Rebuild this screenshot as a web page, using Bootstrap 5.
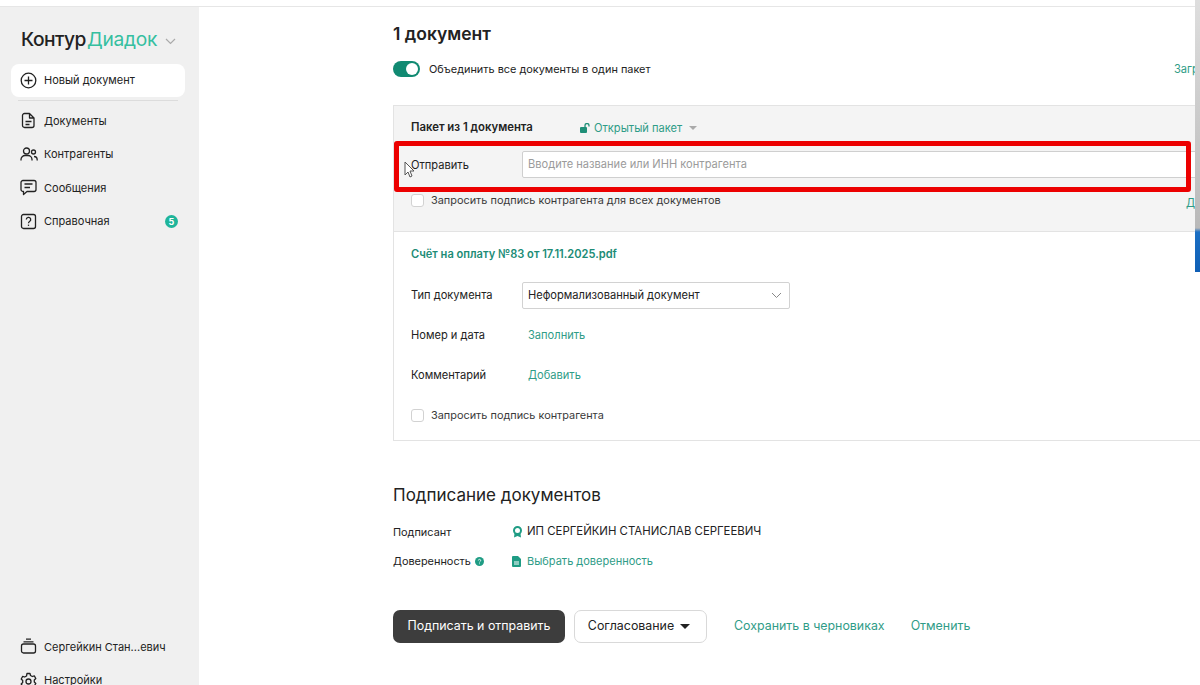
<!DOCTYPE html>
<html lang="ru"><head><meta charset="utf-8">
<link href="https://cdn.jsdelivr.net/npm/bootstrap@5.3.0/dist/css/bootstrap.min.css" rel="stylesheet">
<style>
html,body{height:685px;overflow:hidden}
body{font-family:Inter,"Liberation Sans",sans-serif;font-size:11.1px;color:#222;background:#fff;position:relative}
.shell{overflow:hidden;border-top:1px solid #e6e6e6;margin-top:6px;height:679px}
.side{width:199px;flex:none;background:#f0f0f0;height:679px;position:relative}
.logo{padding:20px 0 0 21px;height:57px;font-size:19.2px;letter-spacing:-.5px;line-height:24px;font-weight:500;color:#222;white-space:nowrap}
.logo b{font-weight:400;color:#35bfa0;margin-left:1px;letter-spacing:-.3px}
.logo svg{margin-left:3px;vertical-align:1px}
.sitem{display:flex;align-items:center;height:33.6px;padding-left:9px;margin-left:11px;width:174px;gap:7px;white-space:nowrap;font-size:11px}
.sitem svg{flex:none}
.snew{background:#fff;border-radius:8px;height:33px}
.sdiv{border-top:1px solid #dcdcdc;margin:3px 21px 3px 18px;height:0}
.cnt{margin-left:auto;margin-right:7px;width:13px;height:13px;border-radius:50%;background:#1fb59b;color:#fff;font-size:9px;font-weight:700;display:flex;align-items:center;justify-content:center}
.sfoot{position:absolute;left:0;top:623px}
.main{flex:1;min-width:0;padding:0 0 0 194px;position:relative;overflow:hidden}
.ttl{font-size:17.5px;font-weight:600;line-height:22px;margin:16px 0 0;color:#222}
.lnk{color:#2f9c87;text-decoration:none}
.tog{width:27px;height:16px;border-radius:8px;background:#118a72;position:relative;flex:none;display:block}
.tog::after{content:"";position:absolute;right:2px;top:2px;width:12px;height:12px;border-radius:50%;background:#fff}
.togrow{margin-top:16px;height:16px;gap:9px;font-size:10.9px}
.togend{position:absolute;left:975px;top:54px;white-space:nowrap}
.pack{margin-top:28px;border:1px solid #e3e3e3;border-right:0;width:900px}
.phead{background:#f4f4f4;height:126px;padding-left:17px;border-bottom:1px solid #e3e3e3;position:relative}
.prow1{height:44px;display:flex;align-items:center;font-weight:600;font-size:11.35px}
.pktitle{width:169px;flex:none}
.prow1 .open{font-weight:400;font-size:11.1px;display:flex;align-items:center;gap:3px}
.caret{display:inline-block;border-left:4px solid transparent;border-right:4px solid transparent;border-top:4px solid #aaa;margin-left:4px}
.prow2{display:flex;align-items:center;height:28px}
.lab{width:111px;flex:none}
.prow2 .lab{padding-top:2px}
.inp{flex:1;height:27px;border:1px solid #cfcfcf;border-radius:2px;background:#fff;color:#9b9b9b;display:flex;align-items:center;padding-left:5px}
.cbrow{display:flex;align-items:center;gap:7px;color:#3a3a3a;font-size:10.9px}
.headcb{margin-top:14px}
.cbx{width:13px;height:13px;border:1px solid #d2d2d2;border-radius:3px;background:#fff;flex:none;display:block}
.dlink{position:absolute;left:792px;top:89px}
.pbody{padding:14px 17px 0;height:208px}
.fname{font-weight:600;color:#208c76;line-height:16px}
.frow{display:flex;align-items:center;height:27px;margin-top:13px}
.frow.first{margin-top:20px}
.frow .lnk{margin-left:6px}
.sel{width:268px;height:27px;border:1px solid #d2d2d2;border-radius:2px;display:flex;align-items:center;justify-content:space-between;padding:0 7px 0 5px}
.lastcb{margin-top:19px;height:14px}
.h2x{font-size:17px;font-weight:400;line-height:22px;margin:43px 0 0;color:#222}
.srow{display:flex;align-items:center;height:16px;font-size:10.9px;margin-top:13px}
.srow.first{margin-top:18px}
.srow .slab{width:119px;flex:none}
.val{font-size:11.4px;display:flex;align-items:center;gap:4px}
.val.lnk{font-size:11px;gap:5px}
.btnrow{margin-top:41px;height:33px;display:flex;align-items:center;font-size:12.4px}
.bmain{background:#3d3d3d;color:#fff;border:0;border-radius:7px;height:33px;width:172px;font-size:12.4px;padding:0}
.bsec{background:#fff;color:#222;border:1px solid #d9d9d9;border-radius:7px;height:33px;width:133px;margin-left:9px;font-size:12.4px;padding:0 3px 0 0;display:flex;align-items:center;justify-content:center;gap:6px}
.bsec i{border-left:5px solid transparent;border-right:5px solid transparent;border-top:5px solid #222;display:block}
.save{margin-left:27px}
.canc{margin-left:26px}
.edge{position:absolute;right:0;top:0;width:5px;height:272px;background:linear-gradient(#dedede 0,#b9b9b9 228px,#1b6fc4 232px,#0f5fb5 272px)}
.redbox{position:absolute;left:394px;top:141px;width:797px;height:51px;border:5px solid #ec0000;border-radius:3px}
.cur{position:absolute;left:404px;top:161px}
</style></head><body>
<div class="shell d-flex">
 <aside class="side">
  <div class="logo">Контур<b>Диадок</b> <svg width="11" height="7" viewBox="0 0 11 7"><path d="M1 1l4.500 4.500L10 1" fill="none" stroke="#aaa" stroke-width="1.200"/></svg></div>
  <div class="sitem snew"><svg width="17" height="17" viewBox="0 0 17 17" fill="none" stroke="#222" stroke-width="1.300"><circle cx="8.500" cy="8.500" r="7.300"/><path d="M8.500 4.500v8M4.500 8.500h8"/></svg><span>Новый документ</span></div>
  <div class="sdiv"></div>
  <div class="sitem"><svg width="17" height="17" viewBox="0 0 17 17" fill="none" stroke="#222" stroke-width="1.300" stroke-linejoin="round"><path d="M4.500 1.500h5l4.500 4.500v7.500a2 2 0 0 1-2 2h-7.500a2 2 0 0 1-2-2v-10a2 2 0 0 1 2-2zM9.500 1.500v4.500H14M5.500 9.500h6M5.500 12.500h4"/></svg><span>Документы</span></div>
  <div class="sitem"><svg width="18" height="17" viewBox="0 0 18 17" fill="none" stroke="#222" stroke-width="1.300"><circle cx="6.500" cy="5" r="3"/><path d="M1 14.500v-1a4 4 0 0 1 4-4h3a4 4 0 0 1 4 4v1"/><circle cx="13.500" cy="6" r="2"/><path d="M14 10.500c2 0 3.200 1.500 3.200 3.500v.5"/></svg><span style="margin-left:-1px">Контрагенты</span></div>
  <div class="sitem"><svg width="17" height="17" viewBox="0 0 17 17" fill="none" stroke="#222" stroke-width="1.300" stroke-linejoin="round"><path d="M3 1.500h11a2 2 0 0 1 2 2v7a2 2 0 0 1-2 2H7l-3.500 3v-3H3a2 2 0 0 1-2-2v-7a2 2 0 0 1 2-2zM4.500 5h8M4.500 8.500h5.500"/></svg><span>Сообщения</span></div>
  <div class="sitem"><svg width="17" height="17" viewBox="0 0 17 17" fill="none" stroke="#222" stroke-width="1.300"><rect x="1.500" y="1.500" width="14" height="14" rx="2"/><path d="M6.300 6.600a2.200 2.200 0 1 1 3.300 1.900c-.8.500-1.100.9-1.100 1.700"/><path d="M8.500 11.600v1.300"/></svg><span>Справочная</span><span class="cnt">5</span></div>
  <div class="sfoot">
   <div class="sitem"><svg width="17" height="17" viewBox="0 0 17 17" fill="none" stroke="#222" stroke-width="1.300"><rect x="1.500" y="6" width="14" height="9" rx="2"/><path d="M3.500 3.800h10M6 1.200h5"/></svg><span>Сергейкин Стан...евич</span></div>
   <div class="sitem"><svg width="17" height="17" viewBox="0 0 17 17" fill="none" stroke="#222" stroke-width="1.300" stroke-linejoin="round"><path d="M7 1.500h3l.5 2 1.800 1 2-.6 1.500 2.600-1.500 1.500v2l1.500 1.500-1.500 2.600-2-.6-1.800 1-.5 2H7l-.5-2-1.800-1-2 .6L1.200 12l1.500-1.500v-2L1.200 7l1.500-2.600 2 .6 1.800-1z"/><circle cx="8.500" cy="9.500" r="2.500"/></svg><span>Настройки</span></div>
  </div>
 </aside>
 <main class="main">
  <h1 class="ttl">1 документ</h1>
  <div class="d-flex align-items-center togrow"><span class="tog"></span><span>Объединить все документы в один пакет</span></div>
  <a class="lnk togend" href="#">Загрузить</a>
  <section class="pack">
   <div class="phead">
    <div class="prow1"><span class="pktitle">Пакет из 1 документа</span>
     <span class="open lnk"><svg width="11" height="10" viewBox="0 0 11 10"><rect x="0" y="4" width="7" height="6" rx="1" fill="#1f8f78"/><path d="M5 4V2.500a2 2 0 0 1 4 0V3.500" fill="none" stroke="#1f8f78" stroke-width="1.300"/></svg>Открытый пакет<i class="caret"></i></span></div>
    <div class="prow2"><span class="lab">Отправить</span><div class="inp">Вводите название или ИНН контрагента</div></div>
    <div class="cbrow headcb"><span class="cbx"></span><span>Запросить подпись контрагента для всех документов</span></div>
    <a class="lnk dlink" href="#">Добавить</a>
   </div>
   <div class="pbody">
    <div class="fname">Счёт на оплату №83 от 17.11.2025.pdf</div>
    <div class="frow first"><span class="lab">Тип документа</span><div class="sel"><span>Неформализованный документ</span><svg width="11" height="7" viewBox="0 0 11 7"><path d="M1 1l4.500 4.500L10 1" fill="none" stroke="#888" stroke-width="1"/></svg></div></div>
    <div class="frow"><span class="lab">Номер и дата</span><a class="lnk" href="#">Заполнить</a></div>
    <div class="frow"><span class="lab">Комментарий</span><a class="lnk" href="#">Добавить</a></div>
    <div class="cbrow lastcb"><span class="cbx"></span><span>Запросить подпись контрагента</span></div>
   </div>
  </section>
  <h2 class="h2x">Подписание документов</h2>
  <div class="srow first"><span class="slab">Подписант</span><span class="val"><svg width="11" height="12" viewBox="0 0 11 12"><circle cx="5.500" cy="4.500" r="3.500" fill="none" stroke="#1f9c84" stroke-width="2"/><path d="M2.500 7.500L2 11.500l3.500-1.500 3.500 1.500-.5-4z" fill="#1f9c84"/></svg>ИП СЕРГЕЙКИН СТАНИСЛАВ СЕРГЕЕВИЧ</span></div>
  <div class="srow"><span class="slab d-flex align-items-center gap-1">Доверенность <svg width="9" height="9" viewBox="0 0 9 9"><circle cx="4.500" cy="4.500" r="4.500" fill="#1f9c84"/><path d="M3.300 3.500a1.200 1.200 0 1 1 1.700 1.100c-.4.200-.5.400-.5.800M4.500 6.400v.8" stroke="#fff" stroke-width=".8" fill="none"/></svg></span><span class="val lnk"><svg width="10" height="11" viewBox="0 0 10 11"><path d="M1 0h5l3 3v7a1 1 0 0 1-1 1H1a1 1 0 0 1-1-1V1a1 1 0 0 1 1-1z" fill="#1f9c84"/><path d="M2 6h5M2 8h5" stroke="#fff" stroke-width="1"/></svg><span>Выбрать доверенность</span></span></div>
  <div class="btnrow"><button class="btn bmain">Подписать и отправить</button><button class="btn bsec">Согласование <i></i></button><a class="lnk save" href="#">Сохранить в черновиках</a><a class="lnk canc" href="#">Отменить</a></div>
 </main>
</div>
<div class="edge"></div>
<div class="redbox"></div>
<svg class="cur" width="12" height="18" viewBox="0 0 12 18"><path d="M1 1v13l3-3 2 5 2-1-2-5h4z" fill="#fff" stroke="#555" stroke-width="1"/></svg>
</body></html>
